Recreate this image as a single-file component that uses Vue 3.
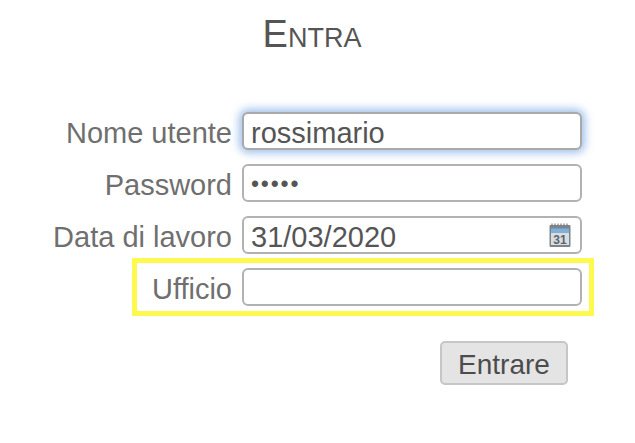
<script setup>
const rows = [
  { label: 'Nome utente', value: 'rossimario', type: 'text', focus: true },
  { label: 'Password', value: '•••••', type: 'dots' },
  { label: 'Data di lavoro', value: '31/03/2020', type: 'date' },
  { label: 'Ufficio', value: '', type: 'text', mark: true }
]
</script>

<template>
  <main class="page">
    <h1 class="title">Entra</h1>
    <form class="form" @submit.prevent>
      <div v-for="r in rows" :key="r.label" class="row" :class="{ mark: r.mark }">
        <label class="label">{{ r.label }}</label>
        <div class="field" :class="{ focus: r.focus }">
          <span class="value" :class="{ dots: r.type === 'dots' }">{{ r.value }}</span>
          <svg v-if="r.type === 'date'" class="cal" viewBox="0 0 22 24" width="22" height="24">
            <rect x="0.5" y="2" width="21" height="22" rx="1" fill="#7d858c" />
            <rect x="2" y="5.5" width="18" height="4.5" fill="#7fb0dc" />
            <rect x="2" y="10" width="18" height="12" fill="#d9dde0" />
            <path d="M3 0.5v3M6 0.5v3M9 0.5v3M12 0.5v3M15 0.5v3M18 0.5v3" stroke="#7b8289" stroke-width="1.2" />
            <text x="11" y="20.5" class="caltext" text-anchor="middle">31</text>
          </svg>
        </div>
      </div>
      <div class="actions">
        <button class="btn" type="button">Entrare</button>
      </div>
    </form>
  </main>
</template>

<style scoped>
.page {
  width: 635px;
  height: 443px;
  box-sizing: border-box;
  padding-top: 10px;
  padding-right: 11px;
  font-family: "Liberation Sans", Arial, sans-serif;
  font-variant-ligatures: none;
  background: #fff;
  overflow: hidden;
}
.title {
  margin: 0;
  height: 48px;
  line-height: 48px;
  text-align: center;
  font-size: 38px;
  font-weight: 400;
  font-variant: small-caps;
  color: #555;
}
.form {
  margin-top: 54px;
  display: flex;
  flex-direction: column;
  gap: 14px;
  padding-left: 10px;
}
.row {
  display: flex;
  align-items: center;
  justify-content: flex-end;
  gap: 10px;
  width: 572px;
  height: 38px;
  box-sizing: border-box;
}
.row.mark {
  width: 584px;
  position: relative;
  padding-right: 12px;
}
.row.mark::before {
  content: "";
  position: absolute;
  left: 122px;
  right: 0;
  top: -10px;
  bottom: -10px;
  border: 5px solid #fdf94e;
}
.label {
  position: relative;
  font-size: 29px;
  color: #6f6f6f;
  white-space: nowrap;
  padding-top: 4px;
}
.field {
  position: relative;
  width: 340px;
  height: 38px;
  box-sizing: border-box;
  border: 2px solid #b2b2b2;
  border-radius: 6px;
  background: #fff;
  display: flex;
  align-items: center;
  justify-content: space-between;
  padding: 0 7px;
  flex: none;
}
.field.focus {
  box-shadow: 0 0 9px 3px rgba(120, 165, 225, 0.7);
  border-color: #a9a9a9;
}
.value {
  font-size: 29px;
  color: #555;
  white-space: nowrap;
  padding-top: 4px;
}
.value.dots {
  font-size: 23px;
  letter-spacing: 1.8px;
  padding-top: 2px;
}
.cal {
  flex: none;
  margin-right: 2px;
}
.caltext {
  font-size: 12px;
  font-weight: 700;
  fill: #5d646b;
  font-family: "Liberation Sans", Arial, sans-serif;
}
.actions {
  display: flex;
  justify-content: flex-end;
  width: 558px;
  margin-top: 21px;
}
.btn {
  width: 128px;
  height: 44px;
  box-sizing: border-box;
  border: 2px solid #c6c6c6;
  border-radius: 5px;
  background: #e4e4e4;
  font-family: "Liberation Sans", Arial, sans-serif;
  font-size: 28px;
  font-variant-ligatures: none;
  color: #4c4c4c;
  padding: 4px 0 0;
}
</style>

<style>
html, body { margin: 0; background: #fff; }
</style>
